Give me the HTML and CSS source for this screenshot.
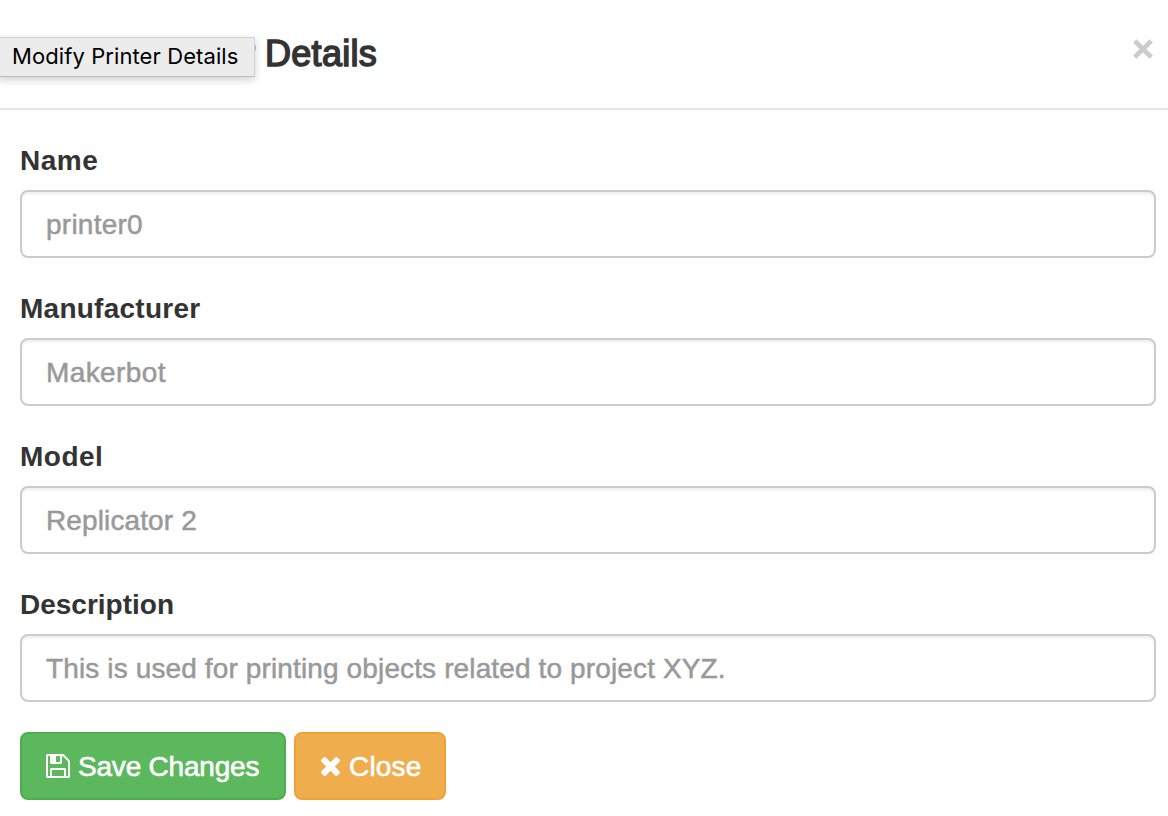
FILE: index.html
```html
<!DOCTYPE html>
<html lang="en">
<head>
<meta charset="utf-8">
<title>Modify Printer Details</title>
<link rel="stylesheet" href="styles.css">
</head>
<body>
<div class="modal">
  <header class="modal-header">
    <h4 class="modal-title"><span class="title-start">Modify Printer</span><span class="title-end">Details</span></h4>
    <button class="dismiss" type="button" aria-label="Close"><svg viewBox="0 0 22 20"><path d="M2.800 2 19.200 18.200M19.200 2 2.800 18.200"/></svg></button>
    <div class="tooltip"><span>Modify Printer Details</span></div>
  </header>
  <form class="modal-body">
    <div class="form-group"><label class="label-name" for="name">Name</label><input class="field-name" id="name" type="text" placeholder="printer0"></div>
    <div class="form-group"><label class="label-manufacturer" for="manufacturer">Manufacturer</label><input class="field-manufacturer" id="manufacturer" type="text" placeholder="Makerbot"></div>
    <div class="form-group"><label class="label-model" for="model">Model</label><input class="field-model" id="model" type="text" placeholder="Replicator 2"></div>
    <div class="form-group"><label class="label-description" for="description">Description</label><input class="field-description" id="description" type="text" placeholder="This is used for printing objects related to project XYZ."></div>
    <div class="actions">
      <button class="btn btn-success" type="button"><svg class="icon-save" viewBox="0 128 1536 1536"><path d="M384 1536h768v-384h-768v384zm896 0h128v-896q0-14-10-38.500t-20-34.500l-281-281q-10-10-34-20t-39-10v416q0 40-28 68t-68 28h-576q-40 0-68-28t-28-68v-416h-128v1280h128v-416q0-40 28-68t68-28h832q40 0 68 28t28 68v416zm-384-928v-320q0-13-9.500-22.500t-22.500-9.500h-192q-13 0-22.500 9.500t-9.500 22.500v320q0 13 9.500 22.500t22.500 9.500h192q13 0 22.500-9.500t9.500-22.500zm640 32v928q0 40-28 68t-68 28h-1344q-40 0-68-28t-28-68v-1344q0-40 28-68t68-28h928q40 0 88 20t76 48l280 280q28 28 48 76t20 88z"/></svg><span>Save Changes</span></button>
      <button class="btn btn-warning" type="button"><svg class="icon-times" viewBox="110 366 1188 1188"><path d="M1298 1322q0 40-28 68l-136 136q-28 28-68 28t-68-28l-294-294-294 294q-28 28-68 28t-68-28l-136-136q-28-28-28-68t28-68l294-294-294-294q-28-28-28-68t28-68l136-136q28-28 68-28t68 28l294 294 294-294q28-28 68-28t68 28l136 136q28 28 28 68t-28 68l-294 294 294 294q28 28 28 68z"/></svg><span>Close</span></button>
    </div>
  </form>
</div>
</body>
</html>
```

FILE: styles.css
```css
* { box-sizing: border-box; }
body {
  margin: 0;
  background: #fff;
  color: #333;
  font: 28px/40px "Liberation Sans", Arial, sans-serif;
  overflow: hidden;
}
.modal { height: 816px; }
.modal-header {
  position: relative;
  display: flex;
  justify-content: space-between;
  align-items: flex-start;
  height: 110px;
  padding: 29px 14px 0 20px;
  border-bottom: 2px solid #e5e5e5;
}
.modal-title {
  display: flex;
  margin: 0;
  font-size: 36px;
  line-height: 50px;
  font-weight: 400;
  -webkit-text-stroke: 1.5px #333;
}
.title-start { width: 245px; letter-spacing: 1px; white-space: nowrap; }
.title-end { letter-spacing: .3px; }
.dismiss {
  display: flex;
  margin: 10px 0 0;
  padding: 0;
  border: 0;
  background: none;
}
.dismiss svg { width: 22px; height: 20px; fill: none; stroke: #ccc; stroke-width: 4.7; }
.tooltip {
  position: absolute;
  left: -2px;
  top: 37px;
  width: 257px;
  height: 40px;
  padding-left: 13px;
  border: 1px solid #d2d2d2;
  border-bottom-color: #bdbdbd;
  background: #ececec;
  box-shadow: 0 3px 8px rgba(0, 0, 0, .18);
  color: #000;
  font: 22px/37px Inter, sans-serif;
  letter-spacing: .09px;
  white-space: nowrap;
}
.modal-body { padding: 30px 12px 0 20px; }
.form-group { display: flex; flex-direction: column; gap: 9px; margin-bottom: 30px; }
label { align-self: flex-start; padding-top: 1px; font-weight: 700; line-height: 40px; }
.label-name, .label-model { letter-spacing: .5px; }
.label-manufacturer { letter-spacing: .25px; }
input {
  width: 100%;
  height: 68px;
  padding: 2px 24px 0;
  border: 2px solid #ccc;
  border-radius: 8px;
  background: #fff;
  box-shadow: inset 0 2px 3px rgba(0, 0, 0, .075);
  font: 28px/40px "Liberation Sans", Arial, sans-serif;
  outline: 0;
}
input::placeholder { color: #999; opacity: 1; -webkit-text-stroke: .5px #999; }
.field-name { letter-spacing: .25px; }
.field-manufacturer { letter-spacing: .4px; }
.field-model { letter-spacing: .12px; }
.field-description { letter-spacing: .13px; }
.actions { display: flex; gap: 8px; }
.btn {
  display: flex;
  align-items: center;
  height: 68px;
  padding: 0 0 0 24px;
  border: 2px solid;
  border-radius: 8px;
  color: #fff;
  font: 28px/40px "Liberation Sans", Arial, sans-serif;
  white-space: nowrap;
  -webkit-text-stroke: .6px #fff;
}
.btn span { padding-top: 2px; }
.btn svg { fill: #fff; flex: none; stroke: none; }
.btn-success { width: 266px; background: #5cb85c; border-color: #4cae4c; letter-spacing: -.2px; }
.btn-warning { width: 152px; background: #f0ad4e; border-color: #eea236; letter-spacing: .2px; }
.icon-save { width: 24px; height: 24px; margin-right: 8px; }
.icon-times { width: 19px; height: 19px; margin: 1px 9px 0 1px; }
```
